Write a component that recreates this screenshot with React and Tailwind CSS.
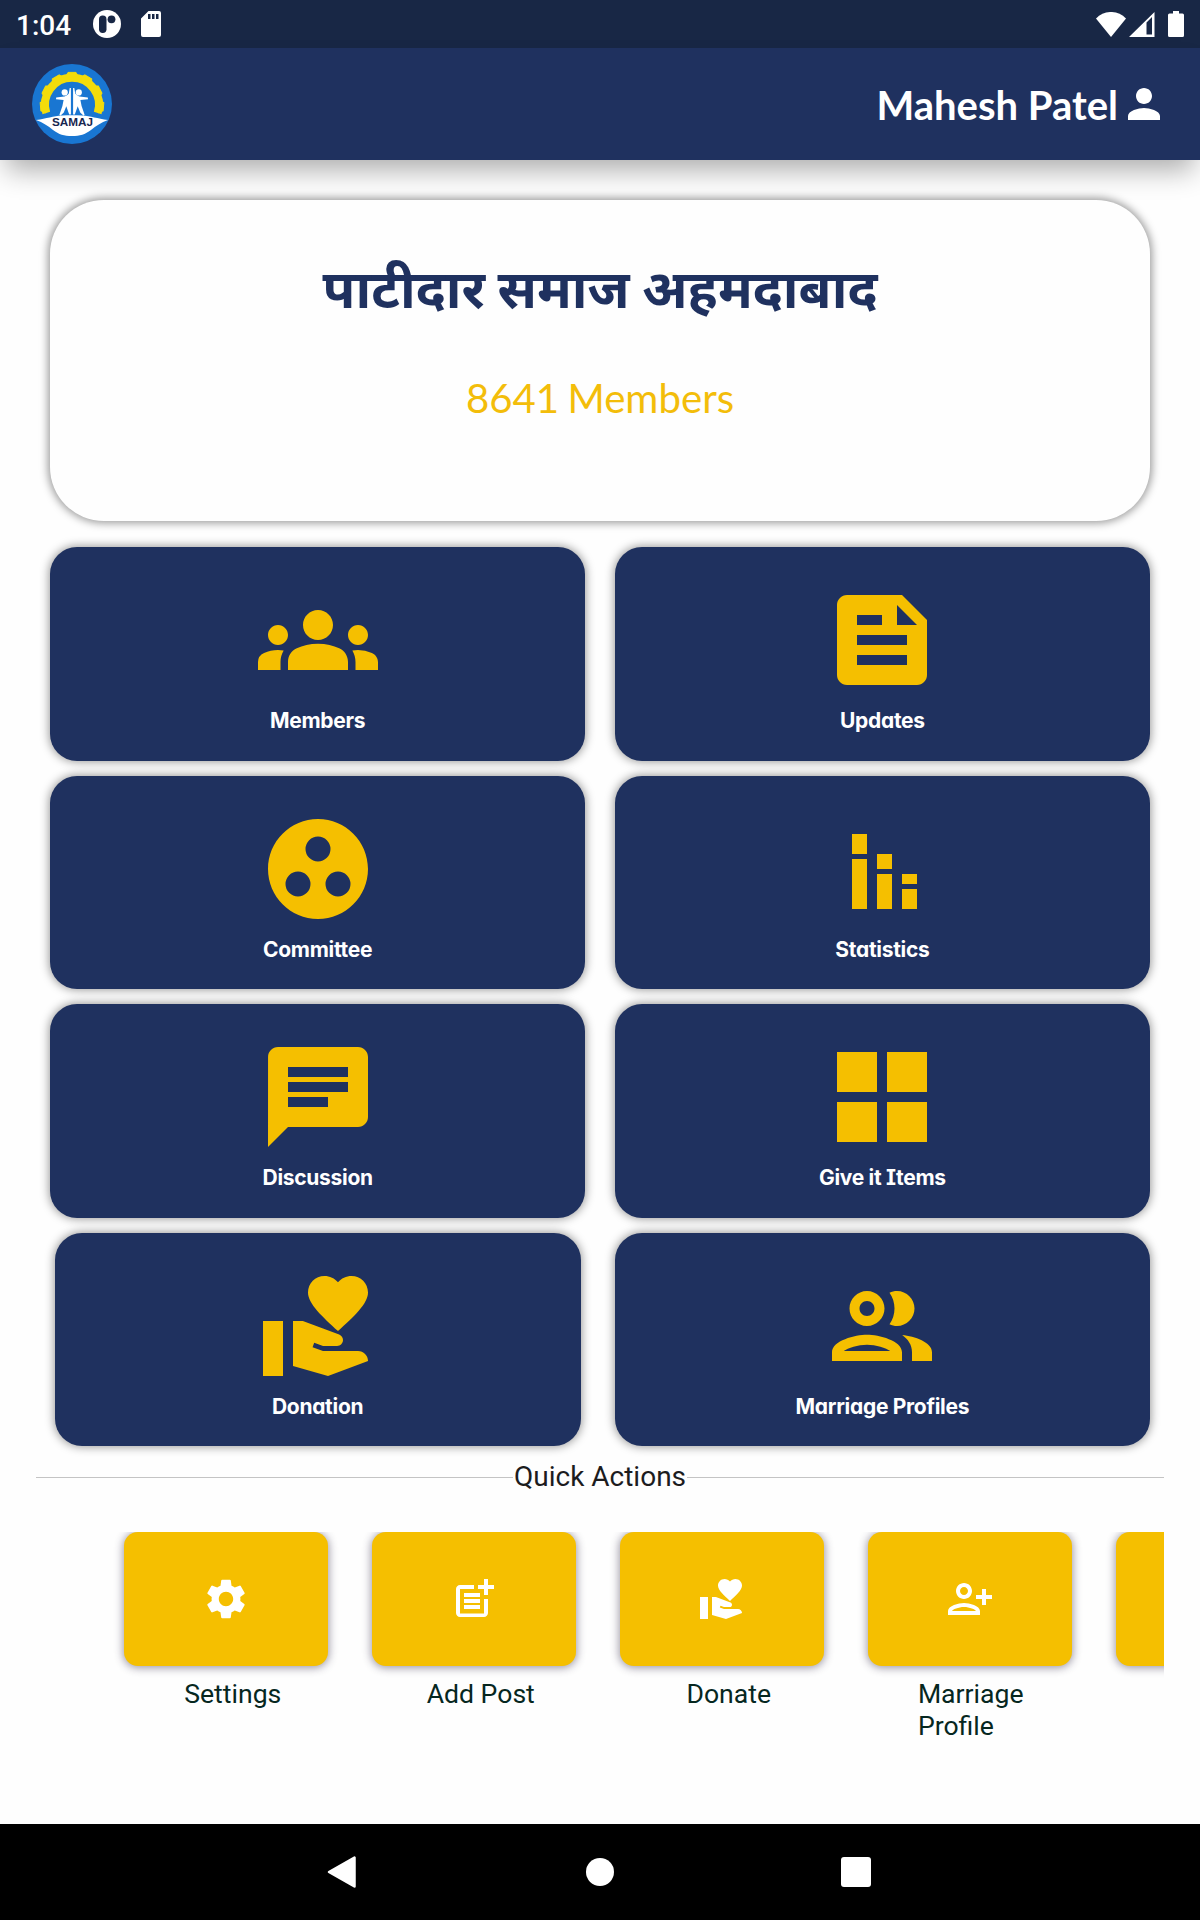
import React from "react";
import {
  MdGroups,
  MdFeed,
  MdGroupWork,
  MdChat,
  MdVolunteerActivism,
  MdSettings,
  MdPostAdd,
  MdPerson,
} from "react-icons/md";

const StackedBarIcon = ({ className }) => (
  <svg viewBox="0 0 24 24" fill="currentColor" className={className}>
    <path d="M6 10h3v10H6zM6 5h3v4H6zM16 16h3v4h-3zM16 13h3v2h-3zM11 13h3v7h-3zM11 9h3v3h-3z" />
  </svg>
);

const GridIcon = ({ className }) => (
  <svg viewBox="0 0 24 24" fill="currentColor" className={className}>
    <path d="M3 3h8v8H3zM13 3h8v8h-8zM3 13h8v8H3zM13 13h8v8h-8z" />
  </svg>
);

const PeopleIcon = ({ className }) => (
  <svg viewBox="0 0 24 24" fill="currentColor" className={className}>
    <path d="M9 13.75c-2.34 0-7 1.17-7 3.5V19h14v-1.75c0-2.33-4.66-3.5-7-3.5zM4.34 17c.84-.58 2.87-1.25 4.66-1.25s3.82.67 4.66 1.25H4.34zM9 12c1.93 0 3.5-1.57 3.5-3.5S10.93 5 9 5 5.5 6.57 5.5 8.5 7.07 12 9 12zm0-5c.83 0 1.5.67 1.5 1.5S9.83 10 9 10s-1.5-.67-1.5-1.5S8.17 7 9 7zm7.04 6.81c1.16.84 1.96 1.96 1.96 3.44V19h4v-1.75c0-2.02-3.5-3.17-5.96-3.44zM15 12c1.93 0 3.5-1.57 3.5-3.5S16.93 5 15 5c-.54 0-1.04.13-1.5.35.63.89 1 1.98 1 3.15s-.37 2.26-1 3.15c.46.22.96.35 1.5.35z" />
  </svg>
);

const PersonAddIcon = ({ className }) => (
  <svg viewBox="0 0 24 24" fill="currentColor" className={className}>
    <path d="M13 8c0-2.21-1.79-4-4-4S5 5.79 5 8s1.79 4 4 4 4-1.79 4-4zm-2 0c0 1.1-.9 2-2 2s-2-.9-2-2 .9-2 2-2 2 .9 2 2zM1 18v2h16v-2c0-2.66-5.33-4-8-4s-8 1.34-8 4zm2 0c.2-.71 3.3-2 6-2 2.69 0 5.77 1.28 6 2H3zM20 15v-3h3v-2h-3V7h-2v3h-3v2h3v3h2z" />
  </svg>
);

const SamajLogo = () => (
  <svg viewBox="0 0 80 80" className="h-20 w-20">
    <circle cx="40" cy="40" r="40" fill="#1976d2" />
    <path
      d="M14.3 48.5A27 27 0 1 1 65.7 48.5"
      fill="none"
      stroke="#f3dc0b"
      strokeWidth="8"
      transform="translate(0 .5)"
    />
    {[-95, -63, -31, 0, 31, 63, 95].map((angle) => (
      <path
        key={angle}
        d="M33.5 13L36 8.4h8l2.5 4.6z"
        fill="#f3dc0b"
        stroke="#f3dc0b"
        strokeLinejoin="round"
        transform={`rotate(${angle} 40 40)`}
      />
    ))}
    <g fill="#fff">
      <circle cx="32.7" cy="28.4" r="3.1" />
      <circle cx="46.8" cy="28.4" r="3.1" />
      <path d="M24 35.2l.2-1.6 6.200-.8c3-.4 5-1.600 6.400-3.400L37.700 24h1.200v26.500h-1.700l-2.900-8.200-2.500 6.200-3.400 3.300-1-1 3-8.800 1.200-6z" />
      <path d="M56 35.200l-.2-1.600-6.200-.8c-3-.4-5-1.600-6.400-3.400L42.300 24h-1.200v26.500h1.700l2.900-8.200 2.500 6.200 3.400 3.300 1-1-3-8.800-1.200-6z" />
      <path d="M4 56c11-1.500 17-4 26-4.500 7-.4 13-.4 20 0 9 .5 15 3 26 4.500-7 2.500-12 6-17 10-6 4.500-11 6-19 6s-13-1.500-19-6C16 62 11 58.500 4 56z" />
    </g>
    <text
      x="40.5"
      y="62"
      textAnchor="middle"
      textLength="41"
      lengthAdjust="spacingAndGlyphs"
      fill="#17264f"
      className="font-['Liberation_Sans'] text-[11.5px] font-bold"
    >
      SAMAJ
    </text>
  </svg>
);

const StatusBar = () => (
  <div className="flex h-12 items-center justify-between bg-[#182745] px-4 text-white">
    <div className="flex items-center">
      <span className="w-[77px] pt-1 font-['Roboto'] text-[28px] font-medium leading-none">
        1:04
      </span>
      <svg viewBox="0 0 28 28" className="h-7 w-7">
        <circle cx="14" cy="14" r="14" fill="#fff" />
        <rect x="6" y="5.5" width="7.5" height="17.5" rx="3.7" fill="#182745" />
        <circle cx="18.5" cy="9.3" r="3.9" fill="#182745" />
      </svg>
      <svg viewBox="0 0 20 26" className="ml-5 h-[26px] w-5">
        <path
          fillRule="evenodd"
          fill="#fff"
          d="M7.5 0H18a2 2 0 0 1 2 2v22a2 2 0 0 1-2 2H2a2 2 0 0 1-2-2V7.5zM7 3v5h2.5V3zM11 3v5h2.5V3zM15 3v5h2.5V3z"
        />
      </svg>
    </div>
    <div className="flex items-center">
      <svg viewBox="0 0 30 25" className="h-[25px] w-[30px]">
        <path d="M0 6.500C8-2.200 22-2.200 30 6.500L15 25z" fill="#fff" />
      </svg>
      <svg viewBox="0 0 26 25" className="ml-[3px] h-[25px] w-[26px]">
        <path
          fillRule="evenodd"
          d="M25.5 0v25H0zM17.5 10.5v12H23V5z"
          fill="#fff"
        />
      </svg>
      <svg viewBox="0 0 16 26" className="ml-[13px] h-[26px] w-4">
        <path
          d="M5 0h6v2.500h3.500A1.500 1.500 0 0 1 16 4v20.500a1.500 1.500 0 0 1-1.500 1.500h-13A1.500 1.500 0 0 1 0 24.500V4a1.500 1.500 0 0 1 1.500-1.500H5z"
          fill="#fff"
        />
      </svg>
    </div>
  </div>
);

const Header = () => (
  <header className="flex h-28 items-center justify-between bg-[#1f315f] px-8 text-white shadow-[0_16px_26px_-6px_rgba(0,0,0,0.32)]">
    <SamajLogo />
    <div className="flex items-center">
      <span className="pt-0.5 font-['Lato'] text-[40px] font-bold leading-[48px]">
        Mahesh Patel
      </span>
      <MdPerson className="ml-0.5 h-12 w-12" />
    </div>
  </header>
);

const menuItems = [
  { label: "Members", icon: MdGroups },
  { label: "Updates", icon: MdFeed },
  { label: "Committee", icon: MdGroupWork },
  { label: "Statistics", icon: StackedBarIcon },
  { label: "Discussion", icon: MdChat },
  { label: "Give it Items", icon: GridIcon },
  { label: "Donation", icon: MdVolunteerActivism, narrow: true },
  { label: "Marriage Profiles", icon: PeopleIcon },
];

const quickActions = [
  { label: "Settings", icon: MdSettings },
  { label: "Add Post", icon: MdPostAdd },
  { label: "Donate", icon: MdVolunteerActivism },
  { label: "Marriage Profile", icon: PersonAddIcon, wrap: true },
  { label: "", icon: null },
];

const MenuTile = ({ label, icon: Icon, narrow = false }) => (
  <div
    className={`flex h-[213.5px] flex-col items-center rounded-[27px] bg-[#1f315f] pt-[33px] shadow-[0_0_10px_1px_rgba(0,0,0,0.4)] ${
      narrow ? "mx-[4.5px]" : ""
    }`}
  >
    <Icon className="h-[120px] w-[120px] shrink-0 text-[#f5bf00]" />
    <span className="mt-[7px] font-['Inter'] text-[21px] font-bold leading-7 tracking-[-0.3px] text-white [font-feature-settings:'cv08','cv11']">
      {label}
    </span>
  </div>
);

const QuickAction = ({ label, icon: Icon, wrap = false }) => (
  <div className="flex w-[204.5px] shrink-0 flex-col items-center">
    <div className="flex h-[133.5px] w-full items-center justify-center rounded-[14px] bg-[#f5bf00] text-white shadow-[0_1px_9px_1px_rgba(40,30,60,0.45)]">
      {Icon && <Icon className="h-12 w-12" />}
    </div>
    <span
      className={`mt-3 font-['Roboto'] text-[26.6px] leading-8 text-[#06271f] ${
        wrap ? "ml-0.5 w-min" : "ml-3.5 whitespace-nowrap"
      }`}
    >
      {label}
    </span>
  </div>
);

const App = () => {
  return (
    <div className="flex h-[1920px] w-[1200px] flex-col overflow-hidden bg-[#fefefe]">
      <StatusBar />
      <Header />
      <main className="flex flex-1 flex-col pt-10">
        <section className="mx-[50px] flex h-[321px] flex-col items-center rounded-[54px] bg-[#fefefe] shadow-[0_0_8px_2px_rgba(0,0,0,0.4)]">
          <h1 className="mt-[52px] whitespace-nowrap font-['Noto_Sans','Noto_Sans_Devanagari',sans-serif] text-[53.5px] font-bold leading-[72px] text-[#1f315f] [word-spacing:-1.5px]">
            पाटीदार समाज अहमदाबाद
          </h1>
          <p className="mt-[50px] font-['Lato'] text-[40.2px] leading-[48px] text-[#f3bd0a] [word-spacing:-2px]">
            8641 Members
          </p>
        </section>

        <div className="mx-[50px] mt-[26px] grid grid-cols-2 gap-x-[29.5px] gap-y-[15px]">
          {menuItems.map((item) => (
            <MenuTile key={item.label} {...item} />
          ))}
        </div>

        <div className="mx-9 mt-[15px] flex items-center">
          <div className="h-px flex-1 bg-[#c4c4c4]" />
          <span className="px-px font-['Roboto'] text-[28px] leading-8 text-[#1c1c1e]">
            Quick Actions
          </span>
          <div className="h-px flex-1 bg-[#c4c4c4]" />
        </div>

        <div className="mx-9 mt-[39px] flex h-[240px] gap-[43.5px] overflow-hidden pl-[87.5px]">
          {quickActions.map((action) => (
            <QuickAction key={action.label} {...action} />
          ))}
        </div>
      </main>
      <nav className="flex h-24 items-center justify-between bg-black pl-[327px] pr-[329px] text-white">
        <svg viewBox="0 0 29 32" className="h-8 w-[29px]">
          <path
            d="M2 16L27.5 1.5v29z"
            fill="#fff"
            stroke="#fff"
            strokeWidth="2.5"
            strokeLinejoin="round"
          />
        </svg>
        <div className="ml-[3px] h-7 w-7 rounded-full bg-white" />
        <div className="h-[30px] w-[30px] rounded-[3px] bg-white" />
      </nav>
    </div>
  );
};

export default App;
